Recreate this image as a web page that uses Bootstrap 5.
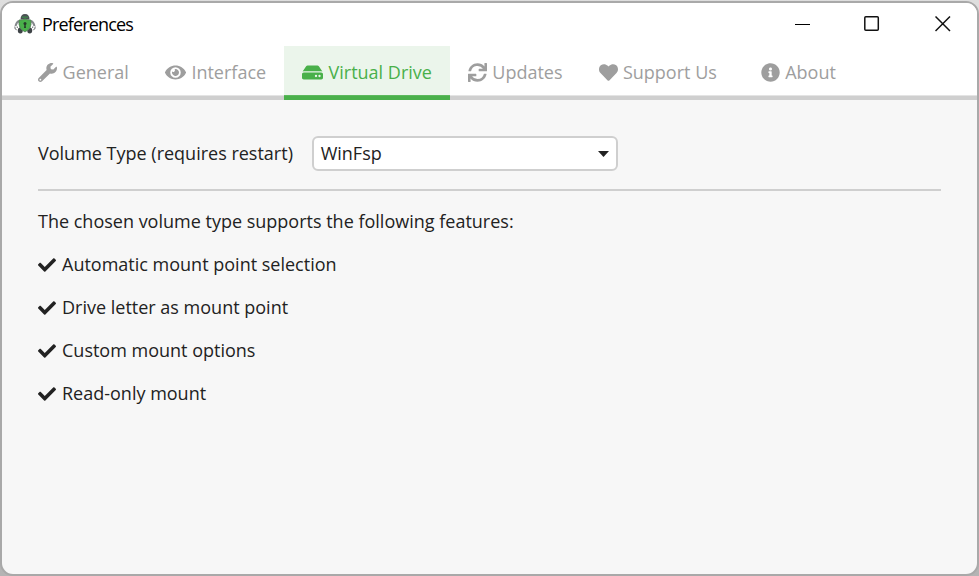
<!DOCTYPE html>
<html lang="en">
<head>
<meta charset="utf-8">
<title>Preferences</title>
<link rel="stylesheet" href="https://cdn.jsdelivr.net/npm/bootstrap@5.3.0/dist/css/bootstrap.min.css">
<style>
body{height:576px;overflow:hidden;background:linear-gradient(#dedede,#b4b4b4);font-family:"Open Sans",sans-serif;font-size:18px;line-height:25px;color:#222}
.win{height:575px;margin-top:1px;border:2px solid #a9a9a9;border-radius:13px;background:#f7f7f7;overflow:hidden}
.titlebar{height:43px;padding:0 26px 2px 12px}
.caption{font-size:18px;color:#000;letter-spacing:-.85px;margin-left:6px;padding-top:2px}
.controls{gap:53px}
.close-mark{margin-left:2px}
.tabs{height:54px;padding-left:18px;box-shadow:inset 0 -4px #cfcfcf,inset 0 -5px #e4e4e4}
.tabs .nav-link{height:54px;min-width:127px;padding:0 18px 1px;gap:5.4px;border-radius:0;color:#9e9e9e}
.tabs .nav-link.active{background:#ebf5eb;color:#49b04a;box-shadow:inset 0 -4px #49b04a,inset 0 -5px #5cb95d}
.glyph{width:19px;height:19px;fill:currentColor;flex:none}
.glyph.wide{width:21px}
.panel{padding:36px;gap:18px}
.volume{width:306px;height:35px;margin-left:.7px;padding:0 7px;border:2px solid #cfcfcf;border-radius:6px;background:#fff;color:#222;font-size:18px}
.rule{height:2px;background:#cfcfcf}
.check{width:18px;height:18px;margin-right:6px;flex:none;fill:#222}
.features{gap:18px}
</style>
<script src="https://cdn.jsdelivr.net/npm/bootstrap@5.3.0/dist/js/bootstrap.bundle.min.js"></script>
</head>
<body>
<svg class="d-none"><symbol id="check" viewBox="0 0 512 512"><path d="M173.898 439.404l-166.4-166.4c-9.997-9.997-9.997-26.206 0-36.204l36.203-36.204c9.997-9.998 26.207-9.998 36.204 0L192 312.690 432.095 72.596c9.997-9.997 26.207-9.997 36.204 0l36.203 36.204c9.997 9.997 9.997 26.206 0 36.204l-294.400 294.401c-9.998 9.997-26.207 9.997-36.204-.001z"/></symbol></svg>
<div class="win d-flex flex-column">
  <header class="titlebar d-flex align-items-center bg-white">
    <svg width="22" height="22" viewBox="0 0 22 22">
      <path d="M6.500 6.500Q6.500 1 11 1t4.500 5.500z" fill="#4b5054"/><path d="M8 4.200h6" stroke="#3c8a4c" stroke-width="1.200"/>
      <path d="M5 8Q2.500 9 1.500 13M17 8q2.500 1 3.500 5" fill="none" stroke="#85898c" stroke-width="2"/>
      <path d="M.8 13.500l.4 2.500 1.500.8M3.300 13.500v1.500M21.200 13.500l-.4 2.500-1.500.8M18.700 13.500v1.500" fill="none" stroke="#6d7174" stroke-width="1"/>
      <ellipse cx="6.300" cy="17.500" rx="2.500" ry="3" fill="#3e4347"/><ellipse cx="15.700" cy="17.500" rx="2.500" ry="3" fill="#3e4347"/>
      <path d="M5 7q3.500.2 6-1.200Q13.500 7.200 17 7v4.500q0 4.500-6 7.500-6-3-6-7.500z" fill="#49b04a" stroke="#5b7a5f" stroke-width=".8"/>
      <circle cx="11" cy="10.500" r="1.500" fill="#263b2a"/><path d="M10.500 10.500h1l.5 4.500h-2z" fill="#263b2a"/>
    </svg>
    <span class="caption">Preferences</span>
    <div class="controls d-flex align-items-center ms-auto">
      <svg width="16" height="16"><path d="M0 8.500h15" stroke="#000"/></svg>
      <svg width="16" height="16"><rect x=".8" y=".8" width="13.500" height="13.500" rx="1" fill="none" stroke="#111" stroke-width="1.500"/></svg>
      <svg class="close-mark" width="16" height="16"><path d="M.5 .5l14.500 14.500m0-14.500l-14.500 14.500" stroke="#111" stroke-width="1.500"/></svg>
    </div>
  </header>
  <nav class="tabs nav flex-nowrap bg-white">
    <a class="nav-link d-flex align-items-center justify-content-center" href="#"><svg class="glyph" viewBox="0 0 512 512"><path d="M507.730 109.100c-2.240-9.030-13.540-12.090-20.120-5.510l-74.360 74.360-67.880-11.310-11.310-67.880 74.360-74.360c6.620-6.620 3.430-17.900-5.660-20.160-47.380-11.740-99.550.91-136.580 37.930-39.640 39.640-50.550 97.100-34.050 147.200L18.740 402.760c-24.990 24.990-24.990 65.510 0 90.500 24.990 24.990 65.510 24.990 90.500 0l213.210-213.210c50.120 16.710 107.470 5.680 147.370-34.220 37.070-37.070 49.700-89.320 37.910-136.730zM64 472c-13.250 0-24-10.750-24-24 0-13.260 10.750-24 24-24s24 10.740 24 24c0 13.250-10.750 24-24 24z"/></svg><span>General</span></a>
    <a class="nav-link d-flex align-items-center justify-content-center" href="#"><svg class="glyph wide" viewBox="0 0 576 512"><path d="M572.520 241.400C518.290 135.590 410.930 64 288 64S57.680 135.640 3.480 241.410a32.350 32.350 0 0 0 0 29.190C57.710 376.410 165.070 448 288 448s230.320-71.640 284.520-177.410a32.350 32.350 0 0 0 0-29.190zM288 400a144 144 0 1 1 144-144 143.930 143.930 0 0 1-144 144zm0-240a95.310 95.310 0 0 0-25.310 3.790 47.850 47.850 0 0 1-66.900 66.900A95.780 95.780 0 1 0 288 160z"/></svg><span>Interface</span></a>
    <a class="nav-link active d-flex align-items-center justify-content-center" href="#"><svg class="glyph wide" viewBox="0 0 576 512"><path d="M576 304v96c0 26.510-21.490 48-48 48H48c-26.510 0-48-21.490-48-48v-96c0-26.510 21.490-48 48-48h480c26.510 0 48 21.490 48 48zm-48-80a79.557 79.557 0 0 1 30.777 6.165L462.250 85.374A48.003 48.003 0 0 0 422.311 64H153.689a48 48 0 0 0-39.938 21.374L17.223 230.165A79.557 79.557 0 0 1 48 224h480zm-48 96a32 32 0 1 0 0 64 32 32 0 1 0 0-64zm-96 0a32 32 0 1 0 0 64 32 32 0 1 0 0-64z"/></svg><span>Virtual Drive</span></a>
    <a class="nav-link d-flex align-items-center justify-content-center" href="#"><svg class="glyph" viewBox="0 0 512 512"><path d="M440.650 12.570l4 82.770A247.160 247.160 0 0 0 255.830 8C134.730 8 33.910 94.920 12.290 209.820A12 12 0 0 0 24.090 224h49.050a12 12 0 0 0 11.670-9.260 175.910 175.910 0 0 1 317-56.940l-101.460-4.860a12 12 0 0 0-12.570 12v47.410a12 12 0 0 0 12 12H500a12 12 0 0 0 12-12V12a12 12 0 0 0-12-12h-47.370a12 12 0 0 0-11.980 12.570zM255.830 432a175.610 175.610 0 0 1-146-77.800l101.800 4.870a12 12 0 0 0 12.570-12v-47.400a12 12 0 0 0-12-12H12a12 12 0 0 0-12 12V500a12 12 0 0 0 12 12h47.350a12 12 0 0 0 12-12.600l-4.150-82.570A247.170 247.170 0 0 0 255.830 504c121.110 0 221.930-86.920 243.550-201.820a12 12 0 0 0-11.800-14.180h-49.050a12 12 0 0 0-11.670 9.260A175.860 175.860 0 0 1 255.830 432z"/></svg><span>Updates</span></a>
    <a class="nav-link d-flex align-items-center justify-content-center" href="#"><svg class="glyph" viewBox="0 0 512 512"><path d="M462.300 62.600C407.500 15.900 326 24.300 275.700 76.200L256 96.500l-19.700-20.300C186.100 24.300 104.500 15.900 49.700 62.600c-62.800 53.600-66.100 149.800-9.900 207.900l193.500 199.800c12.500 12.900 32.800 12.900 45.300 0l193.500-199.800c56.300-58.100 53-154.300-9.800-207.900z"/></svg><span>Support Us</span></a>
    <a class="nav-link d-flex align-items-center justify-content-center" href="#"><svg class="glyph" viewBox="0 0 512 512"><path d="M256 8C119.043 8 8 119.083 8 256c0 136.997 111.043 248 248 248s248-111.003 248-248C504 119.083 392.957 8 256 8zm0 110c23.196 0 42 18.804 42 42s-18.804 42-42 42-42-18.804-42-42 18.804-42 42-42zm56 254c0 6.627-5.373 12-12 12h-88c-6.627 0-12-5.373-12-12v-24c0-6.627 5.373-12 12-12h12v-64h-12c-6.627 0-12-5.373-12-12v-24c0-6.627 5.373-12 12-12h64c6.627 0 12 5.373 12 12v100h12c6.627 0 12 5.373 12 12v24z"/></svg><span>About</span></a>
  </nav>
  <main class="panel d-flex flex-column">
    <div class="d-flex align-items-center features">
      <span>Volume Type (requires restart)</span>
      <button type="button" class="volume d-flex align-items-center justify-content-between" aria-haspopup="listbox"><span>WinFsp</span><svg width="11" height="6"><path d="M0 0h11L5.500 6z" fill="#222"/></svg></button>
    </div>
    <div class="rule"></div>
    <div>The chosen volume type supports the following features:</div>
    <ul class="features list-unstyled d-flex flex-column mb-0">
      <li class="d-flex align-items-center"><svg class="check"><use href="#check"/></svg><span>Automatic mount point selection</span></li>
      <li class="d-flex align-items-center"><svg class="check"><use href="#check"/></svg><span>Drive letter as mount point</span></li>
      <li class="d-flex align-items-center"><svg class="check"><use href="#check"/></svg><span>Custom mount options</span></li>
      <li class="d-flex align-items-center"><svg class="check"><use href="#check"/></svg><span>Read-only mount</span></li>
    </ul>
  </main>
</div>
</body>
</html>
